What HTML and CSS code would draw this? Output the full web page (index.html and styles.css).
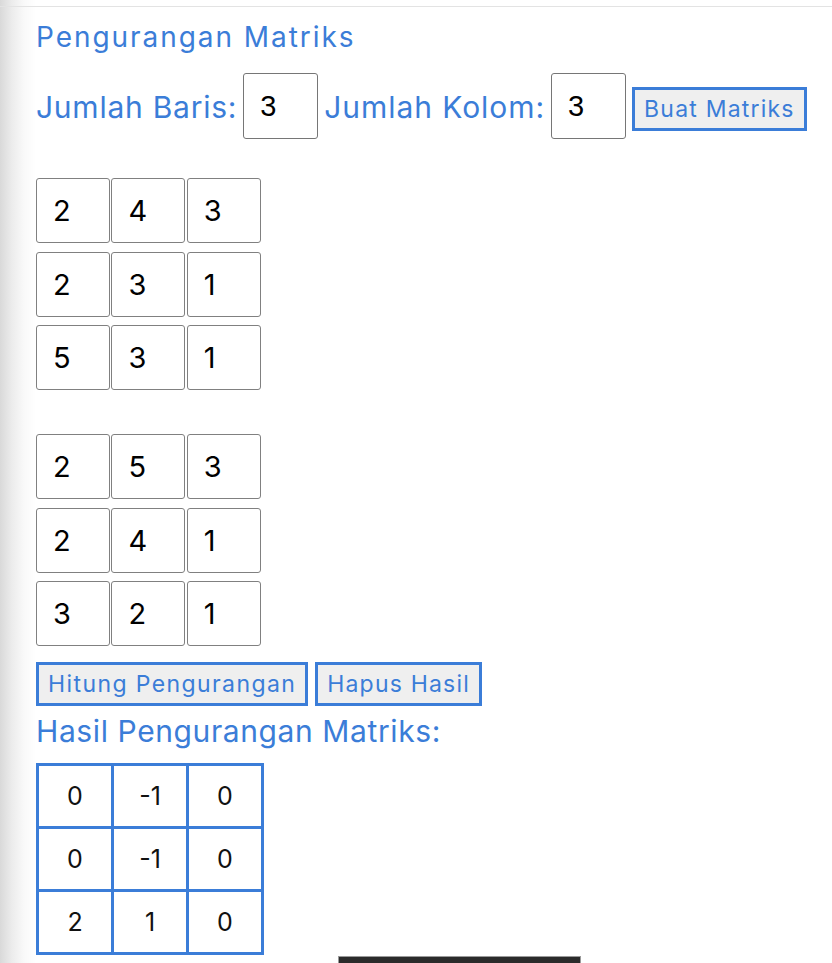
FILE: index.html
```html
<!DOCTYPE html>
<html lang="id">
<head>
<meta charset="utf-8">
<title>Pengurangan Matriks</title>
<link rel="stylesheet" href="styles.css">
</head>
<body>
<main class="page">
  <h2 class="title">Pengurangan Matriks</h2>
  <div class="dims">
    <label class="dim-label" for="rows">Jumlah Baris:</label>
    <input class="dim-input" id="rows" type="text" value="3">
    <label class="dim-label dim-label-cols" for="cols">Jumlah Kolom:</label>
    <input class="dim-input" id="cols" type="text" value="3">
    <button class="btn" type="button">Buat Matriks</button>
  </div>

  <div class="matrix matrix-a">
    <input class="cell" type="text" value="2"><input class="cell" type="text" value="4"><input class="cell" type="text" value="3">
    <input class="cell" type="text" value="2"><input class="cell" type="text" value="3"><input class="cell" type="text" value="1">
    <input class="cell" type="text" value="5"><input class="cell" type="text" value="3"><input class="cell" type="text" value="1">
  </div>

  <div class="matrix matrix-b">
    <input class="cell" type="text" value="2"><input class="cell" type="text" value="5"><input class="cell" type="text" value="3">
    <input class="cell" type="text" value="2"><input class="cell" type="text" value="4"><input class="cell" type="text" value="1">
    <input class="cell" type="text" value="3"><input class="cell" type="text" value="2"><input class="cell" type="text" value="1">
  </div>

  <div class="actions">
    <button class="btn btn-wide" type="button">Hitung Pengurangan</button>
    <button class="btn" type="button">Hapus Hasil</button>
  </div>

  <h3 class="result-title">Hasil Pengurangan Matriks:</h3>
  <table class="result">
    <tr><td>0</td><td>-1</td><td>0</td></tr>
    <tr><td>0</td><td>-1</td><td>0</td></tr>
    <tr><td>2</td><td>1</td><td>0</td></tr>
  </table>
</main>
<div class="home-bar"></div>
</body>
</html>
```

FILE: styles.css
```css
html, body {
  margin: 0;
  height: 100%;
  overflow: hidden;
}

body {
  padding-top: 6px;
  box-sizing: border-box;
  background: linear-gradient(to right, #d9d9d9 0, #ececec 12px, #f9f9f9 24px, #ffffff 36px);
  font-family: Inter, "Noto Sans", sans-serif;
  color: #3b7dd8;
  position: relative;
}

.page {
  border-top: 1px solid #e3e3e3;
  padding-left: 36px;
}

.title {
  margin: 13px 0 0;
  font-size: 28px;
  font-weight: 400;
  line-height: 34px;
  letter-spacing: 1.95px;
  color: #3b7dd8;
}

.dims {
  display: flex;
  align-items: center;
  gap: 6px;
  margin-top: 19px;
  height: 66px;
}

.dim-label {
  font-size: 30px;
  color: #3b7dd8;
  line-height: 36px;
  letter-spacing: 0.75px;
  margin-top: 2px;
}

.dim-label-cols {
  letter-spacing: 0.95px;
}

.dim-input {
  box-sizing: border-box;
  width: 75px;
  height: 66px;
  border: 1px solid #767676;
  border-radius: 3px;
  padding: 0 0 0 16px;
  font-family: "Liberation Sans", Arial, sans-serif;
  font-size: 29px;
  color: #000;
  background: #fff;
  margin: 0;
}

.btn {
  box-sizing: border-box;
  height: 44px;
  border: 3px solid #3b7dd8;
  background: #efefef;
  color: #3b7dd8;
  font-family: Inter, "Noto Sans", sans-serif;
  font-size: 23px;
  letter-spacing: 1.2px;
  padding: 0 9px;
  margin: 0;
  border-radius: 0;
}

.btn-wide {
  letter-spacing: 1.4px;
}

.dims .btn {
  margin-top: 6px;
}

.matrix {
  display: grid;
  grid-template-columns: repeat(3, 74px);
  column-gap: 1.4px;
  row-gap: 8.5px;
}

.matrix-a {
  margin-top: 39px;
}

.matrix-b {
  margin-top: 44px;
}

.cell {
  box-sizing: border-box;
  width: 74px;
  height: 65px;
  margin: 0;
  border: 1px solid #808080;
  border-radius: 3px;
  padding: 0 0 0 16px;
  font-family: Inter, "Noto Sans", sans-serif;
  font-size: 29px;
  color: #000;
  background: #fff;
}

.actions {
  display: flex;
  gap: 7px;
  margin-top: 16px;
}

.result-title {
  margin: 7px 0 0;
  font-size: 30px;
  font-weight: 400;
  line-height: 36px;
  letter-spacing: 0.6px;
  color: #3b7dd8;
}

.result {
  margin-top: 14px;
  border-collapse: collapse;
  border: 3px solid #3b7dd8;
}

.result td {
  border: 3px solid #3b7dd8;
  width: 72px;
  height: 60px;
  padding: 0;
  text-align: center;
  font-size: 25px;
  color: #111;
}

.home-bar {
  position: absolute;
  left: 339px;
  top: 957px;
  width: 241px;
  height: 10px;
  background: #2b2b2b;
  box-shadow: 0 0 0 1px #9a9a9a;
}
```
